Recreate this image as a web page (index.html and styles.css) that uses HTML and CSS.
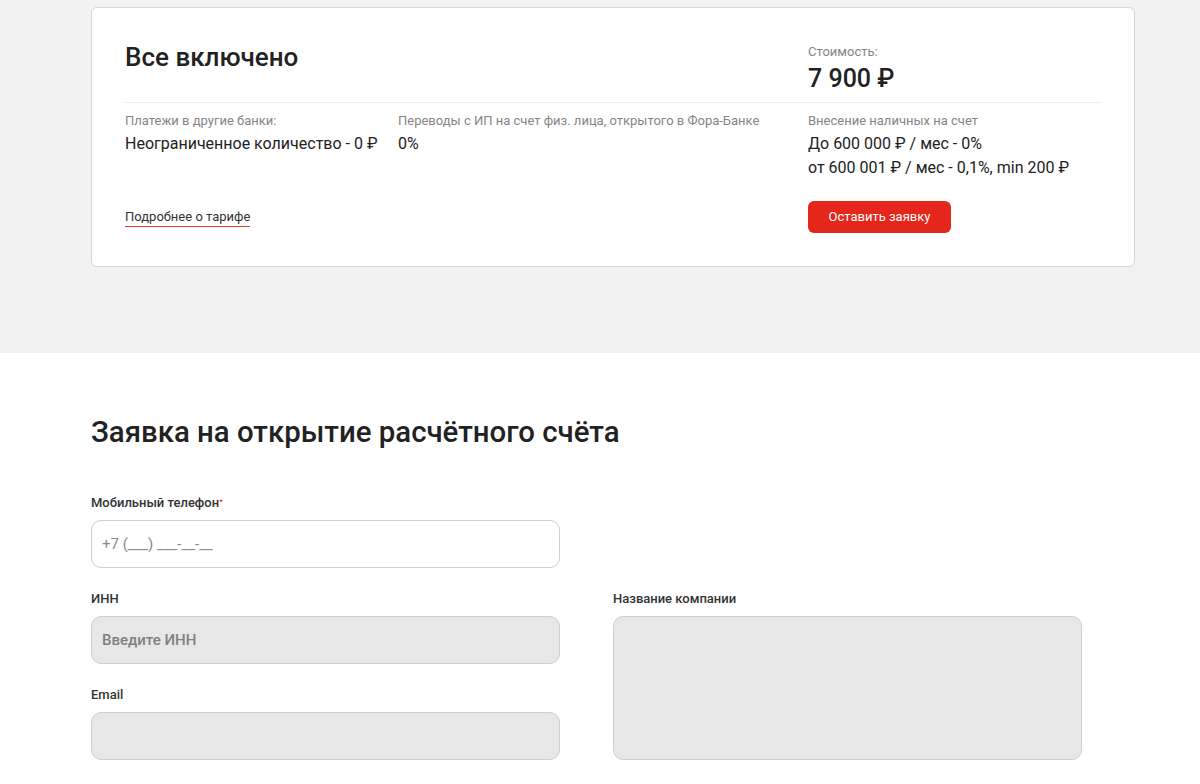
FILE: index.html
```html
<!DOCTYPE html>
<html lang="ru">
<head>
<meta charset="utf-8">
<title>Все включено</title>
<link rel="stylesheet" href="styles.css">
</head>
<body>
<section class="tariffs">
  <div class="card">
    <div class="card-head">
      <h2 class="card-title">Все включено</h2>
      <div class="price-block">
        <div class="label">Стоимость:</div>
        <div class="price">7 900 ₽</div>
      </div>
    </div>
    <div class="card-info">
      <div class="info">
        <div class="label">Платежи в другие банки:</div>
        <div class="value">Неограниченное количество - 0 ₽</div>
      </div>
      <div class="info">
        <div class="label">Переводы с ИП на счет физ. лица, открытого в Фора-Банке</div>
        <div class="value">0%</div>
      </div>
      <div class="info">
        <div class="label">Внесение наличных на счет</div>
        <div class="value">До 600 000 ₽ / мес - 0%<br>от 600 001 ₽ / мес - 0,1%, min 200 ₽</div>
      </div>
    </div>
    <div class="card-foot">
      <a class="more" href="#">Подробнее о тарифе</a>
      <button class="btn" type="button">Оставить заявку</button>
    </div>
  </div>
</section>
<section class="form-section">
  <h1 class="form-title">Заявка на открытие расчётного счёта</h1>
  <form class="form">
    <div class="field f-phone">
      <label class="flabel">Мобильный телефон<span class="req">*</span></label>
      <input class="input" type="text" placeholder="+7 (___) ___-__-__">
    </div>
    <div class="field f-inn">
      <label class="flabel">ИНН</label>
      <input class="input input-gray" type="text" placeholder="Введите ИНН">
    </div>
    <div class="field f-company">
      <label class="flabel">Название компании</label>
      <textarea class="input input-gray textarea"></textarea>
    </div>
    <div class="field f-email">
      <label class="flabel">Email</label>
      <input class="input input-gray" type="text">
    </div>
  </form>
</section>
</body>
</html>
```

FILE: styles.css
```css
* { box-sizing: border-box; }
html, body { margin: 0; padding: 0; }
body {
  font-family: Roboto, "Liberation Sans", Arial, sans-serif;
  color: #222;
  background: #fff;
}
.tariffs {
  background: #f2f2f2;
  padding: 7px 0 86px 91px;
}
.card {
  width: 1044px;
  background: #fff;
  border: 1px solid #d6d6d6;
  border-radius: 6px;
  padding: 34px 33px 33px 33px;
}
.card-head {
  display: flex;
  justify-content: space-between;
  border-bottom: 1px solid #ececec;
  padding-bottom: 9px;
}
.card-title {
  margin: 0;
  font-size: 26px;
  font-weight: 500;
  line-height: 30px;
  color: #222;
}
.price-block { width: 293px; padding-top: 2px; }
.label {
  font-size: 13px;
  line-height: 16px;
  color: #858585;
}
.price {
  margin-top: 5px;
  font-size: 25px;
  font-weight: 500;
  line-height: 28px;
  color: #222;
}
.card-info {
  display: grid;
  grid-template-columns: 273px 410px 293px;
  padding-top: 10px;
}
.value {
  margin-top: 3px;
  font-size: 16px;
  line-height: 24px;
  color: #222;
}
.card-foot {
  display: flex;
  justify-content: space-between;
  align-items: center;
  margin-top: 21px;
}
.more {
  font-size: 13px;
  line-height: 16px;
  color: #333;
  text-decoration: none;
  border-bottom: 1px solid #ea3a2e;
  padding-bottom: 1px;
  margin-top: 1px;
}
.btn {
  height: 32px;
  margin-right: 150px;
  padding: 0 20px;
  border: 0;
  background: #e5261a;
  color: #fff;
  border-radius: 6px;
  font-family: Roboto, "Liberation Sans", Arial, sans-serif;
  font-size: 13px;
  line-height: 32px;
  min-width: 143px;
  text-align: center;
}
.form-section {
  padding: 61px 0 40px 91px;
}
.form-title {
  margin: 0 0 45px;
  font-size: 29.4px;
  font-weight: 500;
  line-height: 36px;
  color: #222;
}
.form {
  display: grid;
  grid-template-columns: 469px 469px;
  column-gap: 53px;
  row-gap: 23px;
}
.field { display: flex; flex-direction: column; }
.f-phone { grid-column: 1; grid-row: 1; }
.f-inn { grid-column: 1; grid-row: 2; }
.f-company { grid-column: 2; grid-row: 2 / span 2; }
.f-email { grid-column: 1; grid-row: 3; }
.flabel {
  font-size: 13px;
  font-weight: 500;
  line-height: 16px;
  color: #333;
  margin-bottom: 9px;
}
.req { color: #e5261a; font-size: 8px; vertical-align: top; line-height: 14px; }
.input {
  height: 48px;
  flex: 0 0 48px;
  border: 1px solid #cfcfcf;
  border-radius: 10px;
  background: #fff;
  padding: 0 10px;
  font-family: Roboto, "Liberation Sans", Arial, sans-serif;
  font-size: 15px;
  color: #222;
  outline: none;
}
.input::placeholder { color: #8a8a8a; }
.input-gray { background: #e7e7e7; }
.input-gray::placeholder { color: #808080; font-weight: 500; }
.textarea { flex: 1 1 auto; resize: none; }
```
